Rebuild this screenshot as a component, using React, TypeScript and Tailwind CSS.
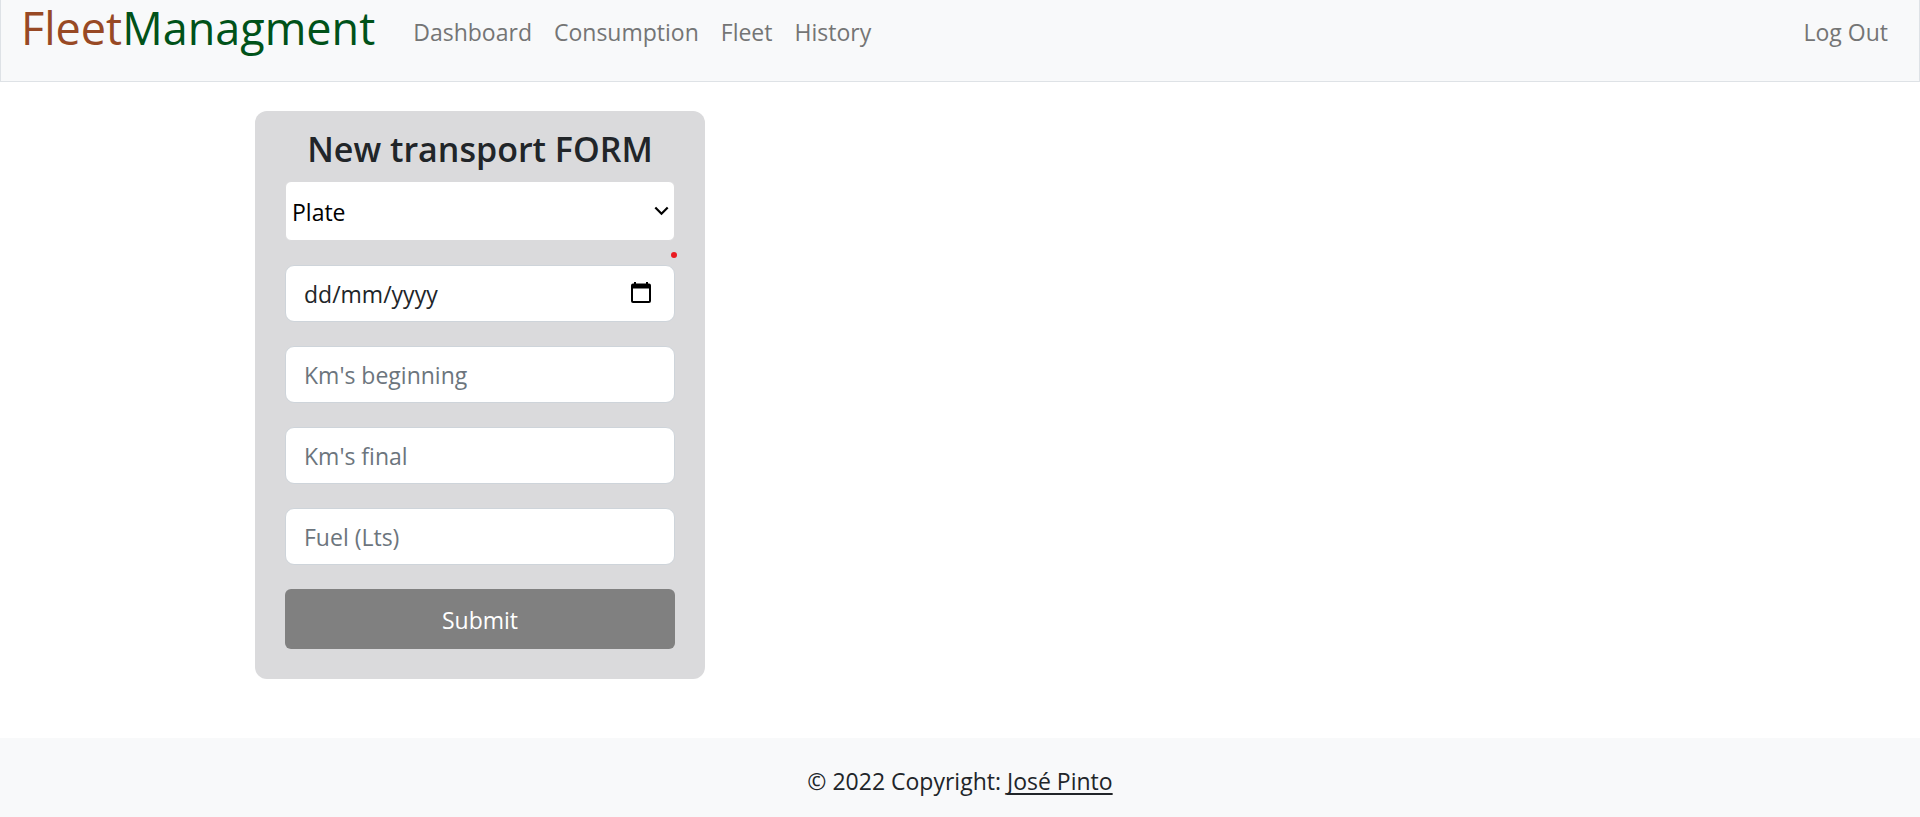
const links = ["Dashboard", "Consumption", "Fleet", "History"];

const numberFields = [
  { id: "km-start", label: "Km's beginning" },
  { id: "km-end", label: "Km's final" },
  { id: "fuel", label: "Fuel (Lts)" },
];

const inputClass =
  "block h-[57px] w-full rounded-[9px] border border-[#ced4da] bg-white px-[18px] text-[23px] leading-9 outline-none";

function Navbar() {
  return (
    <header className="flex h-[82px] items-start border border-t-0 border-[#dee2e6] bg-[#f8f9fa] pr-[31px] pl-5">
      <a href="#" className="text-[45px] leading-14 text-[#005219]">
        <span className="text-[#984924]">Fleet</span>Managment
      </a>
      <nav className="flex flex-1 items-start gap-[22px] pt-[14px] pl-[38px] text-[23px] leading-9 text-[#747575]">
        {links.map((link) => (
          <a key={link} href="#">
            {link}
          </a>
        ))}
        <a href="#" className="ml-auto">
          Log Out
        </a>
      </nav>
    </header>
  );
}

function TransportForm() {
  return (
    <form className="w-full max-w-[450px] rounded-xl bg-[#dadadc] px-[30px] pt-[17px] pb-[30px]">
      <h1 className="mb-[10px] text-center text-[34px] leading-[43px] font-semibold text-[#212529]">
        New transport FORM
      </h1>

      <div className="relative mb-6">
        <select
          id="plate"
          aria-label="Plate"
          className="block h-[60px] w-full appearance-none rounded-md border border-[#dadadc] bg-white px-[6px] pt-[2px] text-[23px] text-black outline-none"
        >
          <option>Plate</option>
        </select>
        <svg
          className="pointer-events-none absolute top-[25px] right-[6px] h-[10px] w-[15px]"
          viewBox="0 0 15 10"
          fill="none"
          stroke="#000"
          strokeWidth="2.2"
        >
          <path d="M1.3 1.5 7.5 7.7 13.7 1.5" />
        </svg>
        <span className="absolute -right-[2px] -bottom-[17px] size-[6px] rounded-full bg-[#ea1b22]" />
      </div>

      <div className="relative mb-6">
        <input
          id="date"
          type="text"
          aria-label="Date"
          placeholder="dd/mm/yyyy"
          className={`${inputClass} placeholder:text-[#212529]`}
        />
        <button
          type="button"
          aria-label="Open calendar"
          className="absolute top-[17px] right-[24px] h-[21px] w-[20px]"
        >
          <svg viewBox="0 0 20 21" className="h-[21px] w-[20px]">
            <path
              fillRule="evenodd"
              d="M3 0h2v1.5h10V0h2v1.5h1a2 2 0 0 1 2 2V19a2 2 0 0 1-2 2H2a2 2 0 0 1-2-2V3.500a2 2 0 0 1 2-2h1zM2 6.500V19h16V6.500z"
            />
          </svg>
        </button>
      </div>

      {numberFields.map(({ id, label }) => (
        <input
          key={id}
          id={id}
          type="text"
          inputMode="decimal"
          aria-label={label}
          placeholder={label}
          className={`${inputClass} mb-6 placeholder:text-[#6c757d]`}
        />
      ))}

      <button
        type="submit"
        className="block h-[60px] w-full rounded-md bg-[#808080] pt-[2px] text-[23px] leading-9 text-white"
      >
        Submit
      </button>
    </form>
  );
}

export default function App() {
  return (
    <div className="flex min-h-screen flex-col bg-white font-['Open_Sans','Noto_Sans',sans-serif]">
      <Navbar />
      <main className="flex-1 px-[255px] pt-[29px] pb-[59px]">
        <TransportForm />
      </main>
      <footer className="bg-[#f8f9fa] pt-[25px] pb-[18px] text-center text-[23px] leading-9 text-[#212529]">
        © 2022 Copyright:{" "}
        <a href="#" className="underline decoration-2 underline-offset-3 [text-decoration-skip-ink:none]">
          José Pinto
        </a>
      </footer>
    </div>
  );
}
